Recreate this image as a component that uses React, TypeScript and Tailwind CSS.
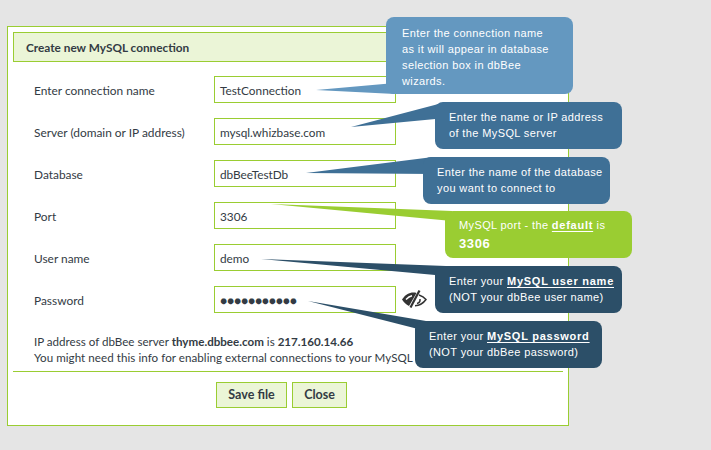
const bubbleFont = "font-['Liberation_Sans',Arial,sans-serif] text-[11px] leading-[16px] tracking-[0.38px] text-white";
const uiFont = "font-['Lato',sans-serif]";
const boldBubble = "font-bold underline underline-offset-2 tracking-[0.75px]";

function Row({ label, value, dots }: { label: string; value: string; dots?: boolean }) {
  return (
    <div className="flex items-center h-[27px]">
      <div className="w-[181px] pl-[1px] pt-[2px] text-[11.9px] text-[#333b44]">{label}</div>
      <div className={"w-[182px] h-[27px] border border-[#9acd32] bg-white flex items-center pl-[5px] pt-[2px] text-[11.8px] text-[#333b44]" + (dots ? " tracking-[-0.1px]" : "")}>
        {value}
      </div>
      {dots && (
        <svg className="ml-[5px] mt-[-1px]" width="26" height="20" viewBox="0 0 26 20" fill="none">
          <path d="M1 10.500C4 6 8 3.500 12.500 3.500c1 0 2 .1 3 .4L8 17C5 15.500 2.800 13.200 1 10.500Z" fill="#333" />
          <path d="M5 10.500c2-2.200 4-3.400 6-3.800" stroke="#fff" strokeWidth="1.400" />
          <path d="M18.500 1.500 9.500 18.500" stroke="#333" strokeWidth="2.200" />
          <path d="M18 6c3 1 5.300 2.500 7 4.500-2.500 3.500-6 6-11 6.300" stroke="#333" strokeWidth="1.500" />
          <path d="M19 10c.3 2.300-1 4-3 4.500" stroke="#333" strokeWidth="1.500" />
        </svg>
      )}
    </div>
  );
}

function Bubble({ className, children }: { className: string; children: React.ReactNode }) {
  return <div className={"absolute rounded-[8px] " + bubbleFont + " " + className}>{children}</div>;
}

export default function App() {
  return (
    <div className="relative w-[711px] h-[450px] overflow-hidden bg-[#e5e5e5]">
      <div className={"absolute left-[7px] top-[26px] w-[562px] h-[400px] border border-[#9acd32] bg-white p-[5px] " + uiFont}>
        <div className="h-[30px] border border-[#9acd32] bg-[#ebf5d7] flex items-center pl-[12px] pt-[2px] text-[11.8px] font-bold text-[#333b44]">
          Create new MySQL connection
        </div>
        <div className="mt-[14px] ml-[20px] flex flex-col gap-[15px]">
          <Row label="Enter connection name" value="TestConnection" />
          <Row label="Server (domain or IP address)" value="mysql.whizbase.com" />
          <Row label="Database" value="dbBeeTestDb" />
          <Row label="Port" value="3306" />
          <Row label="User name" value="demo" />
          <Row label="Password" value="●●●●●●●●●●●" dots />
        </div>
        <div className="mt-[21px] ml-[21px] text-[11.6px] leading-[16px] text-[#333b44] whitespace-nowrap">
          <div>
            IP address of dbBee server <b className="font-bold">thyme.dbbee.com</b> is <b className="font-bold">217.160.14.66</b>
          </div>
          <div className="tracking-[0.05px]">You might need this info for enabling external connections to your MySQL server</div>
        </div>
        <div className="mt-[5px] border-t border-[#9acd32]" />
        <div className="mt-[10px] flex justify-center gap-[5px] pr-[13px]">
          <button className="w-[71px] h-[26px] border border-[#9acd32] bg-[#ebf5d7] text-[12.5px] font-bold text-[#333b44]">Save file</button>
          <button className="w-[55px] h-[26px] border border-[#9acd32] bg-[#ebf5d7] text-[12.5px] font-bold text-[#333b44]">Close</button>
        </div>
      </div>

      <svg className="absolute left-0 top-0" width="711" height="450" viewBox="0 0 711 450">
        <polygon points="316,90 395,83 395,94" fill="#6498c0" />
        <polygon points="351,127 446,102 446,118" fill="#3f7096" />
        <polygon points="306,173 433,157 433,174" fill="#3f7096" />
        <polygon points="271,204 452,211 452,221" fill="#9acd32" />
        <polygon points="261,259 446,266 446,276" fill="#2c4f68" />
        <polygon points="308,301 426,321 426,331" fill="#2c4f68" />
      </svg>

      <Bubble className="left-[386px] top-[17px] w-[187px] h-[77px] bg-[#6498c0] pl-[16px] pt-[8px] leading-[15.4px]">
        Enter the connection name<br />as it will appear in database<br />selection box in dbBee<br />wizards.
      </Bubble>
      <Bubble className="left-[435px] top-[102px] w-[187px] h-[47px] bg-[#3f7096] pl-[14px] pt-[7px]">
        Enter the name or IP address<br />of the MySQL server
      </Bubble>
      <Bubble className="left-[423px] top-[157px] w-[187px] h-[47px] bg-[#3f7096] pl-[14px] pt-[7px]">
        Enter the name of the database<br />you want to connect to
      </Bubble>
      <Bubble className="left-[445px] top-[211px] w-[187px] h-[47px] bg-[#9acd32] pl-[14px] pt-[6px]">
        MySQL port - the <b className={boldBubble}>default</b> is<br /><b className="text-[13px] leading-[21px] tracking-[0.6px]">3306</b>
      </Bubble>
      <Bubble className="left-[435px] top-[266px] w-[187px] h-[47px] bg-[#2c4f68] pl-[14px] pt-[7px]">
        Enter your <b className={boldBubble}>MySQL user name</b><br />(NOT your dbBee user name)
      </Bubble>
      <Bubble className="left-[415px] top-[321px] w-[187px] h-[47px] bg-[#2c4f68] pl-[14px] pt-[7px]">
        Enter your <b className={boldBubble}>MySQL password</b><br />(NOT your dbBee password)
      </Bubble>
    </div>
  );
}
